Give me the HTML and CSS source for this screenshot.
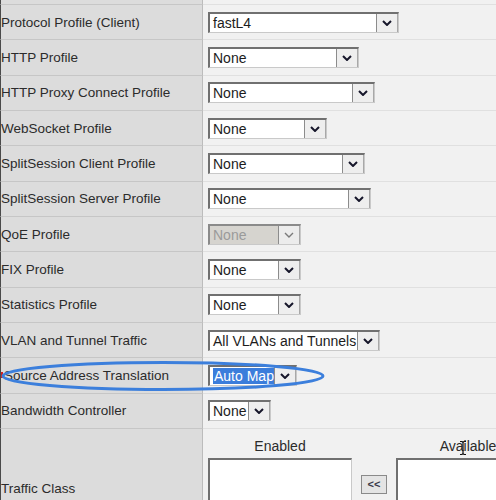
FILE: index.html
```html
<!DOCTYPE html>
<html lang="en">
<head>
  <meta charset="UTF-8" />
  <meta name="viewport" content="width=device-width, initial-scale=1.0"/>
  <title>Virtual Server Properties</title>
  <link rel="stylesheet" href="styles.css">
</head>
<body>
  <div class="props">
    <div class="row row-top"><div class="label"></div><div class="value"></div></div>

    <div class="row">
      <div class="label">Protocol Profile (Client)</div>
      <div class="value"><span class="select w-fast"><span class="sel-text">fastL4</span><span class="sel-btn"><svg viewBox="0 0 10 6"><polyline points="1,1 5,5 9,1"/></svg></span></span></div>
    </div>
    <div class="row">
      <div class="label">HTTP Profile</div>
      <div class="value"><span class="select w-http"><span class="sel-text">None</span><span class="sel-btn"><svg viewBox="0 0 10 6"><polyline points="1,1 5,5 9,1"/></svg></span></span></div>
    </div>
    <div class="row">
      <div class="label">HTTP Proxy Connect Profile</div>
      <div class="value"><span class="select w-proxy"><span class="sel-text">None</span><span class="sel-btn"><svg viewBox="0 0 10 6"><polyline points="1,1 5,5 9,1"/></svg></span></span></div>
    </div>
    <div class="row">
      <div class="label">WebSocket Profile</div>
      <div class="value"><span class="select w-ws"><span class="sel-text">None</span><span class="sel-btn"><svg viewBox="0 0 10 6"><polyline points="1,1 5,5 9,1"/></svg></span></span></div>
    </div>
    <div class="row">
      <div class="label">SplitSession Client Profile</div>
      <div class="value"><span class="select w-ssc"><span class="sel-text">None</span><span class="sel-btn"><svg viewBox="0 0 10 6"><polyline points="1,1 5,5 9,1"/></svg></span></span></div>
    </div>
    <div class="row">
      <div class="label">SplitSession Server Profile</div>
      <div class="value"><span class="select w-sss"><span class="sel-text">None</span><span class="sel-btn"><svg viewBox="0 0 10 6"><polyline points="1,1 5,5 9,1"/></svg></span></span></div>
    </div>
    <div class="row">
      <div class="label">QoE Profile</div>
      <div class="value"><span class="select w-small disabled"><span class="sel-text">None</span><span class="sel-btn"><svg viewBox="0 0 10 6"><polyline points="1,1 5,5 9,1"/></svg></span></span></div>
    </div>
    <div class="row">
      <div class="label">FIX Profile</div>
      <div class="value"><span class="select w-small"><span class="sel-text">None</span><span class="sel-btn"><svg viewBox="0 0 10 6"><polyline points="1,1 5,5 9,1"/></svg></span></span></div>
    </div>
    <div class="row">
      <div class="label">Statistics Profile</div>
      <div class="value"><span class="select w-small"><span class="sel-text">None</span><span class="sel-btn"><svg viewBox="0 0 10 6"><polyline points="1,1 5,5 9,1"/></svg></span></span></div>
    </div>
    <div class="row">
      <div class="label">VLAN and Tunnel Traffic</div>
      <div class="value"><span class="select w-vlan"><span class="sel-text">All VLANs and Tunnels</span><span class="sel-btn"><svg viewBox="0 0 10 6"><polyline points="1,1 5,5 9,1"/></svg></span></span></div>
    </div>
    <div class="row">
      <div class="label label-snat">Source Address Translation</div>
      <div class="value"><span class="select w-auto"><span class="sel-text"><span class="picked">Auto Map</span></span><span class="sel-btn"><svg viewBox="0 0 10 6"><polyline points="1,1 5,5 9,1"/></svg></span></span></div>
    </div>
    <div class="row">
      <div class="label">Bandwidth Controller</div>
      <div class="value"><span class="select w-bw"><span class="sel-text">None</span><span class="sel-btn"><svg viewBox="0 0 10 6"><polyline points="1,1 5,5 9,1"/></svg></span></span></div>
    </div>

    <div class="row row-traffic">
      <div class="label label-traffic">Traffic Class</div>
      <div class="value value-traffic">
        <div class="pick-col">
          <div class="pick-head">Enabled</div>
          <div class="listbox"></div>
        </div>
        <div class="move-col"><button class="move-btn">&lt;&lt;</button></div>
        <div class="pick-col">
          <div class="pick-head">Available</div>
          <div class="listbox"></div>
        </div>
      </div>
    </div>

    <svg class="circle-mark" viewBox="0 0 330 44" width="330" height="44">
      <ellipse cx="163" cy="21" rx="160" ry="13.5"/>
    </svg>

    <svg class="ibeam" viewBox="0 0 8 16" width="8" height="16">
      <path d="M1 1.5h2l1 1 1-1h2M4 2.5v11M1 14.5h2l1-1 1 1h2"/>
    </svg>
  </div>
</body>
</html>
```

FILE: styles.css
```css
body {
  margin: 0;
  background: #f1f1f1;
  font-family: "Liberation Sans", Arial, sans-serif;
  color: #2b2b2b;
  overflow: hidden;
}

.props {
  position: relative;
  display: flex;
  flex-direction: column;
}

.row {
  display: grid;
  grid-template-columns: 203px 1fr;
  height: 35.33px;
}

.row-top {
  height: 5px;
}

.label {
  box-sizing: border-box;
  background: #dcdcdc;
  border-left: 1px solid #4a4a4a;
  border-right: 1px solid #bcbcbc;
  border-bottom: 1px solid #c6c6c6;
  display: flex;
  align-items: center;
  font-size: 13.5px;
  white-space: nowrap;
  overflow: hidden;
}

.value {
  box-sizing: border-box;
  border-bottom: 1px solid #e0e0e0;
  display: flex;
  align-items: center;
  padding-left: 5px;
}

/* required marker, mostly scrolled off the left edge */
.label-snat::before {
  content: "";
  width: 2px;
  height: 6px;
  background: #d42020;
  margin-right: 1px;
}

/* select boxes */
.select {
  box-sizing: border-box;
  display: inline-flex;
  height: 21px;
  background: #fff;
  border-top: 2px solid #707070;
  border-left: 2px solid #707070;
  border-right: 1px solid #c9c9c9;
  border-bottom: 1px solid #c9c9c9;
}

.sel-text {
  flex: 1;
  font-size: 14px;
  line-height: 18px;
  padding-left: 3px;
  color: #1c1c1c;
  white-space: nowrap;
  overflow: hidden;
}

.sel-btn {
  box-sizing: border-box;
  width: 22px;
  background: #eeeeee;
  border-left: 1px solid #8c8c8c;
  border-right: 1px solid #a8a8a8;
  display: flex;
  align-items: center;
  justify-content: center;
}

.sel-btn svg {
  width: 10px;
  height: 6px;
}

.sel-btn polyline {
  fill: none;
  stroke: #16162a;
  stroke-width: 2;
}

.disabled {
  background: #d6d4cf;
  border-top-color: #8a8a8a;
  border-left-color: #8a8a8a;
}

.disabled .sel-text {
  color: #9a9a9a;
}

.disabled .sel-btn {
  background: #ececec;
}

.disabled polyline {
  stroke: #7a7a7a;
  stroke-width: 1.4;
}

.picked {
  background: #3b7ddb;
  color: #fff;
  padding: 0 2px 0 1px;
}

.w-fast { width: 191px; }
.w-http { width: 151px; }
.w-proxy { width: 167px; }
.w-ws { width: 119px; }
.w-ssc { width: 157px; }
.w-sss { width: 163px; }
.w-small { width: 93px; }
.w-vlan { width: 172px; }
.w-auto { width: 89px; }
.w-bw { width: 63px; }

/* traffic class */
.row-traffic {
  height: 100px;
}

.label-traffic {
  align-items: flex-start;
  padding-top: 52px;
  border-bottom: none;
}

.value-traffic {
  align-items: flex-start;
  border-bottom: none;
  gap: 9px;
}

.pick-col {
  display: flex;
  flex-direction: column;
  width: 144px;
  flex-shrink: 0;
}

.pick-head {
  font-size: 14px;
  text-align: center;
  padding-top: 9px;
  height: 20px;
}

.listbox {
  box-sizing: border-box;
  height: 80px;
  background: #fff;
  border-top: 2px solid #707070;
  border-left: 2px solid #707070;
  border-right: 1px solid #c9c9c9;
}

.move-col {
  padding-top: 45px;
}

.move-btn {
  box-sizing: border-box;
  width: 26px;
  height: 19px;
  padding: 0;
  background: #e4e4e4;
  border: 1px solid #8a8a8a;
  font-family: "Liberation Sans", Arial, sans-serif;
  font-size: 11px;
  font-weight: bold;
  color: #3a3a4a;
  line-height: 15px;
}

/* overlays */
.circle-mark {
  position: absolute;
  left: 0;
  top: 355px;
  overflow: visible;
}

.circle-mark ellipse {
  fill: none;
  stroke: #3c7fdc;
  stroke-width: 3;
}

.ibeam {
  position: absolute;
  left: 459px;
  top: 440px;
}

.ibeam path {
  fill: none;
  stroke: #111;
  stroke-width: 1.2;
}
```
